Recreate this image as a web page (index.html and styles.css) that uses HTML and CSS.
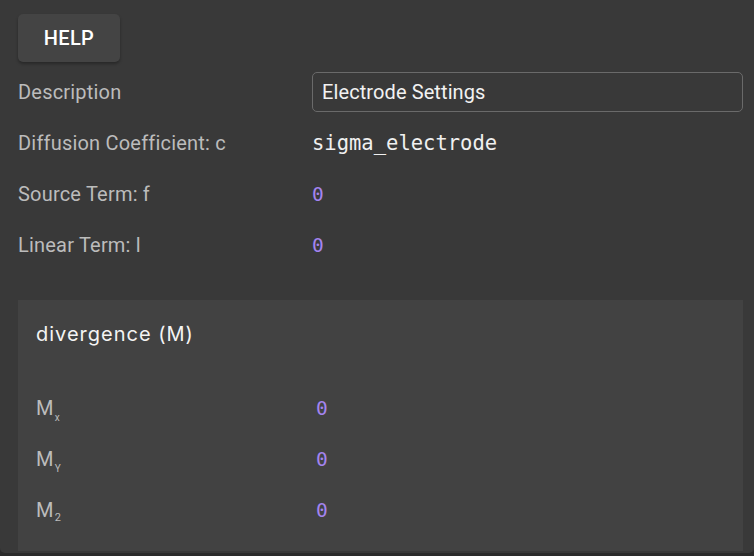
FILE: index.html
```html
<!DOCTYPE html>
<html>
<head>
<meta charset="utf-8">
<link rel="stylesheet" href="styles.css">
</head>
<body>
<div class="panel">
  <button class="help">HELP</button>
  <div class="rows">
    <div class="row">
      <div class="label">Description</div>
      <div class="input">Electrode Settings</div>
    </div>
    <div class="row">
      <div class="label">Diffusion Coefficient: c</div>
      <div class="code">sigma_electrode</div>
    </div>
    <div class="row">
      <div class="label">Source Term: f</div>
      <div class="code num">0</div>
    </div>
    <div class="row">
      <div class="label">Linear Term: l</div>
      <div class="code num">0</div>
    </div>
  </div>
  <div class="card">
    <div class="card-title">divergence (M)</div>
    <div class="card-rows">
      <div class="crow">
        <div class="label">M<span class="sub">x</span></div>
        <div class="code num">0</div>
      </div>
      <div class="crow">
        <div class="label">M<span class="sub">Y</span></div>
        <div class="code num">0</div>
      </div>
      <div class="crow">
        <div class="label">M<span class="sub sub2">2</span></div>
        <div class="code num">0</div>
      </div>
    </div>
  </div>
</div>
</body>
</html>
```

FILE: styles.css
```css
html, body {
  margin: 0;
  padding: 0;
  background: #2b2b2b;
}
body {
  width: 754px;
  height: 556px;
  overflow: hidden;
  font-family: Roboto, "Liberation Sans", sans-serif;
}
.panel {
  background: #393939;
  height: 553px;
  box-sizing: border-box;
  padding: 14px 11px 0 18px;
  border-radius: 0 0 5px 5px;
  display: flex;
  flex-direction: column;
  align-items: stretch;
}
.help {
  align-self: flex-start;
  width: 102px;
  height: 48px;
  border: none;
  border-radius: 5px;
  background: #444444;
  color: #ffffff;
  font-family: Roboto, sans-serif;
  font-weight: 500;
  font-size: 20px;
  letter-spacing: 0.3px;
  box-shadow: 0 2px 3px rgba(0,0,0,0.3);
  padding: 0;
}
.rows {
  margin-top: 10px;
  display: flex;
  flex-direction: column;
  gap: 11px;
}
.row {
  display: grid;
  grid-template-columns: 294px 1fr;
  height: 40px;
  align-items: center;
}
.label {
  color: #bcbcbc;
  font-size: 20px;
  letter-spacing: 0.2px;
}
.input {
  height: 40px;
  box-sizing: border-box;
  border: 1px solid #6a6a6a;
  border-radius: 5px;
  padding: 0 9px;
  display: flex;
  align-items: center;
  color: #f2f2f2;
  font-size: 20px;
  letter-spacing: 0.1px;
}
.code {
  font-family: "DejaVu Sans Mono", monospace;
  font-size: 20.5px;
  color: #f0f0f0;
}
.num {
  color: #a484ef;
  font-size: 19.5px;
}
.card {
  margin-top: 35px;
  background: #424242;
  height: 251px;
  box-sizing: border-box;
  padding: 20px 18px 0 18px;
}
.card-title {
  color: #f4f4f4;
  font-size: 20px;
  line-height: 28px;
  letter-spacing: 1px;
  font-family: Inter, Roboto, sans-serif;
  font-weight: 400;
}
.card-rows {
  margin-top: 40px;
  display: flex;
  flex-direction: column;
  gap: 11px;
}
.crow {
  display: grid;
  grid-template-columns: 280px 1fr;
  height: 40px;
  align-items: center;
}
.sub {
  font-size: 10px;
  position: relative;
  top: 6px;
  margin-left: 1px;
}
.sub2 {
  font-size: 11px;
  top: 4px;
}
```
